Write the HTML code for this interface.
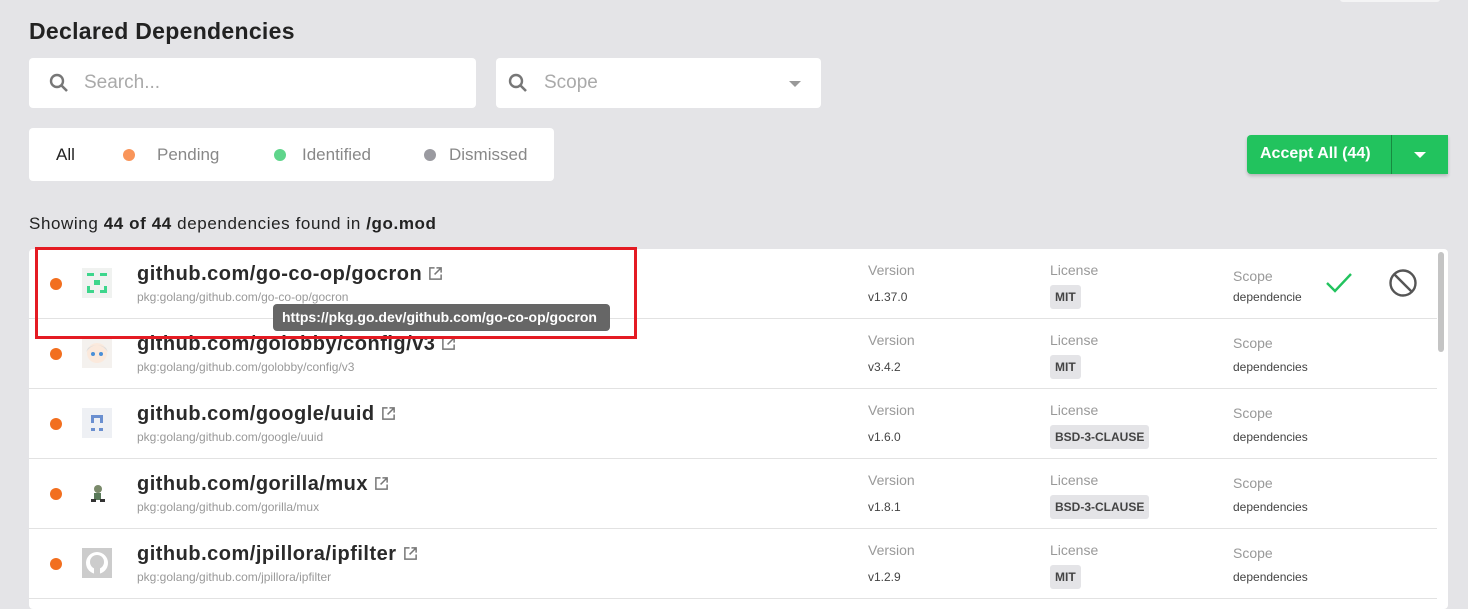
<!DOCTYPE html><html><head><style>
*{box-sizing:border-box;margin:0;padding:0}
body{width:1468px;height:600px;background:#e4e4e7;font-family:"Liberation Sans",sans-serif;position:relative;overflow:hidden;color:#222}
.a{position:absolute}
h1{position:absolute;left:29px;top:18px;font-size:23px;letter-spacing:0.3px;font-weight:bold;color:#222}
.box{position:absolute;background:#fff;border-radius:4px}
.ph{color:#aaa;font-size:19px}
.card{position:absolute;left:29px;top:249px;width:1419px;height:360px;background:#fff;border-radius:4px}
.row{position:absolute;left:0;width:1408px;height:70px;border-bottom:1px solid #e2e2e2}
.dot{position:absolute;left:21px;top:29px;width:12px;height:12px;border-radius:50%;background:#f26f1f}
.ic{position:absolute;left:53px;top:19px;width:30px;height:30px;background:#eef0f2}
.t{position:absolute;left:108px;top:14px;font-size:20px;letter-spacing:0.5px;font-weight:bold;color:#2a2a2a;white-space:nowrap}
.t svg{vertical-align:-1px;margin-left:6px}
.s{position:absolute;left:108px;top:41px;font-size:12px;color:#999}
.lb{position:absolute;font-size:14px;color:#999}
.v{position:absolute;font-size:12px;color:#444}
.bd{position:absolute;font-size:12px;font-weight:bold;color:#444;background:#e4e4e7;border-radius:3px;padding:5px 5px}
</style></head><body>
<div class="a" style="left:1340px;top:-4px;width:100px;height:6px;background:#f4f4f5;border-radius:3px"></div>
<h1>Declared Dependencies</h1>
<div class="box" style="left:29px;top:58px;width:447px;height:50px">
<svg class="a" style="left:18px;top:13px" width="24" height="24" viewBox="0 0 24 24"><circle cx="10" cy="10" r="6" fill="none" stroke="#777" stroke-width="2.4"/><path d="M14.5 14.5L20 20" stroke="#777" stroke-width="2.6"/></svg>
<span class="a ph" style="left:55px;top:14px">Search...</span></div>
<div class="box" style="left:496px;top:58px;width:325px;height:50px">
<svg class="a" style="left:10px;top:13px" width="24" height="24" viewBox="0 0 24 24"><circle cx="10" cy="10" r="6" fill="none" stroke="#777" stroke-width="2.4"/><path d="M14.5 14.5L20 20" stroke="#777" stroke-width="2.6"/></svg>
<span class="a ph" style="left:48px;top:14px">Scope</span>
<div class="a" style="left:293px;top:23px;border:6px solid transparent;border-top:6px solid #999;border-bottom:0"></div></div>
<div class="box" style="left:29px;top:128px;width:525px;height:53px;font-size:17px;color:#888">
<span class="a" style="left:27px;top:17px;color:#222">All</span>
<span class="a" style="left:94px;top:21px;width:12px;height:12px;border-radius:50%;background:#f9955a"></span><span class="a" style="left:128px;top:17px">Pending</span>
<span class="a" style="left:245px;top:21px;width:12px;height:12px;border-radius:50%;background:#5fd58b"></span><span class="a" style="left:273px;top:17px">Identified</span>
<span class="a" style="left:395px;top:21px;width:12px;height:12px;border-radius:50%;background:#9a9aa0"></span><span class="a" style="left:420px;top:17px">Dismissed</span></div>
<div class="a" style="left:1247px;top:135px;width:201px;height:39px;background:#22c35e;border-radius:4px 0 0 4px;box-shadow:0 2px 3px rgba(0,0,0,.2)">
<span class="a" style="left:13px;top:10px;color:#fff;font-weight:bold;font-size:16px">Accept All (44)</span>
<div class="a" style="left:144px;top:0;width:1px;height:39px;background:#178a40"></div>
<div class="a" style="left:167px;top:17px;border:6px solid transparent;border-top:6px solid #fff;border-bottom:0"></div></div>
<div class="a" style="left:29px;top:214px;font-size:17px;letter-spacing:0.6px">Showing <b>44 of 44</b> dependencies found in <b>/go.mod</b></div>
<div class="card">
<div class="a" style="left:1409px;top:3px;width:6px;height:100px;background:#c4c4c4;border-radius:3px"></div>
</div>
<script>
var icons=['<svg width="30" height="30"><rect width="30" height="30" fill="#f0f2f0"/><g fill="#3dd68c"><rect x="5" y="5" width="7" height="3"/><rect x="18" y="5" width="7" height="3"/><rect x="12" y="12" width="6" height="5"/><rect x="5" y="18" width="3" height="7"/><rect x="5" y="22" width="7" height="3"/><rect x="22" y="18" width="3" height="7"/><rect x="18" y="22" width="7" height="3"/></g></svg>',
'<svg width="30" height="30"><rect width="30" height="30" fill="#f4f1ee"/><circle cx="15" cy="15" r="10" fill="#fbe9dc"/><path d="M4 14Q15 0 26 14L24 10Q15 4 6 10Z" fill="#ddd"/><circle cx="11" cy="16" r="2" fill="#4a8fd8"/><circle cx="19" cy="16" r="2" fill="#4a8fd8"/></svg>',
'<svg width="30" height="30"><rect width="30" height="30" fill="#eef0f4"/><g fill="#6a8fd0"><rect x="9" y="7" width="12" height="3"/><rect x="9" y="7" width="3" height="8"/><rect x="18" y="7" width="3" height="8"/><rect x="9" y="20" width="4" height="3"/><rect x="17" y="20" width="4" height="3"/></g></svg>',
'<svg width="30" height="30"><rect width="30" height="30" fill="#fff"/><circle cx="16" cy="11" r="4" fill="#7a8a6a"/><rect x="12" y="15" width="7" height="7" fill="#5a7a5a"/><rect x="9" y="21" width="5" height="3" fill="#333"/><rect x="18" y="21" width="5" height="3" fill="#333"/></svg>',
'<svg width="30" height="30"><rect width="30" height="30" fill="#ccc"/><circle cx="15" cy="15" r="11" fill="#fff"/><circle cx="15" cy="14" r="7" fill="#ccc"/><rect x="12" y="18" width="6" height="8" fill="#ccc"/></svg>'];
var d=[["github.com/go-co-op/gocron","v1.37.0","MIT","dependencie"],["github.com/golobby/config/v3","v3.4.2","MIT","dependencies"],["github.com/google/uuid","v1.6.0","BSD-3-CLAUSE","dependencies"],["github.com/gorilla/mux","v1.8.1","BSD-3-CLAUSE","dependencies"],["github.com/jpillora/ipfilter","v1.2.9","MIT","dependencies"]];
var h='';d.forEach(function(r,i){var top=i*70,st=i==0?3:0;
h+='<div class="row" style="top:'+top+'px"><div class="dot"></div><div class="ic">'+icons[i]+'</div><div class="t">'+r[0]+'<svg width="15" height="15" viewBox="0 0 16 16"><path d="M7 2H2v12h12V9M9 2h5v5M14 2L7 9" fill="none" stroke="#777" stroke-width="1.6"/></svg></div><div class="s">pkg:golang/'+r[0]+'</div><div class="lb" style="left:839px;top:13px">Version</div><div class="v" style="left:839px;top:41px">'+r[1]+'</div><div class="lb" style="left:1021px;top:13px">License</div><div class="bd" style="left:1021px;top:36px">'+r[2]+'</div><div class="lb" style="left:1204px;top:'+(16+st)+'px">Scope</div><div class="v" style="left:1204px;top:41px">'+r[3]+'</div>';
if(i==0)h+='<svg class="a" style="left:1296px;top:22px" width="28" height="24" viewBox="0 0 28 24"><path d="M2 12l8 8L26 3" fill="none" stroke="#22c35e" stroke-width="2.4"/></svg><svg class="a" style="left:1359px;top:19px" width="30" height="30" viewBox="0 0 30 30"><circle cx="15" cy="15" r="12.5" fill="none" stroke="#555" stroke-width="2.4"/><path d="M6 6l18 18" stroke="#555" stroke-width="2.4"/></svg>';
h+='</div>';});
document.querySelector('.card').insertAdjacentHTML('beforeend',h);
</script>
<div class="a" style="left:273px;top:304px;width:337px;height:27px;background:#666;border-radius:4px;color:#fff;font-size:14px;font-weight:bold;padding:5px 9px">https://pkg.go.dev/github.com/go-co-op/gocron</div>
<div class="a" style="left:35px;top:247px;width:602px;height:92px;border:3px solid #e41b23"></div>
</body></html>
